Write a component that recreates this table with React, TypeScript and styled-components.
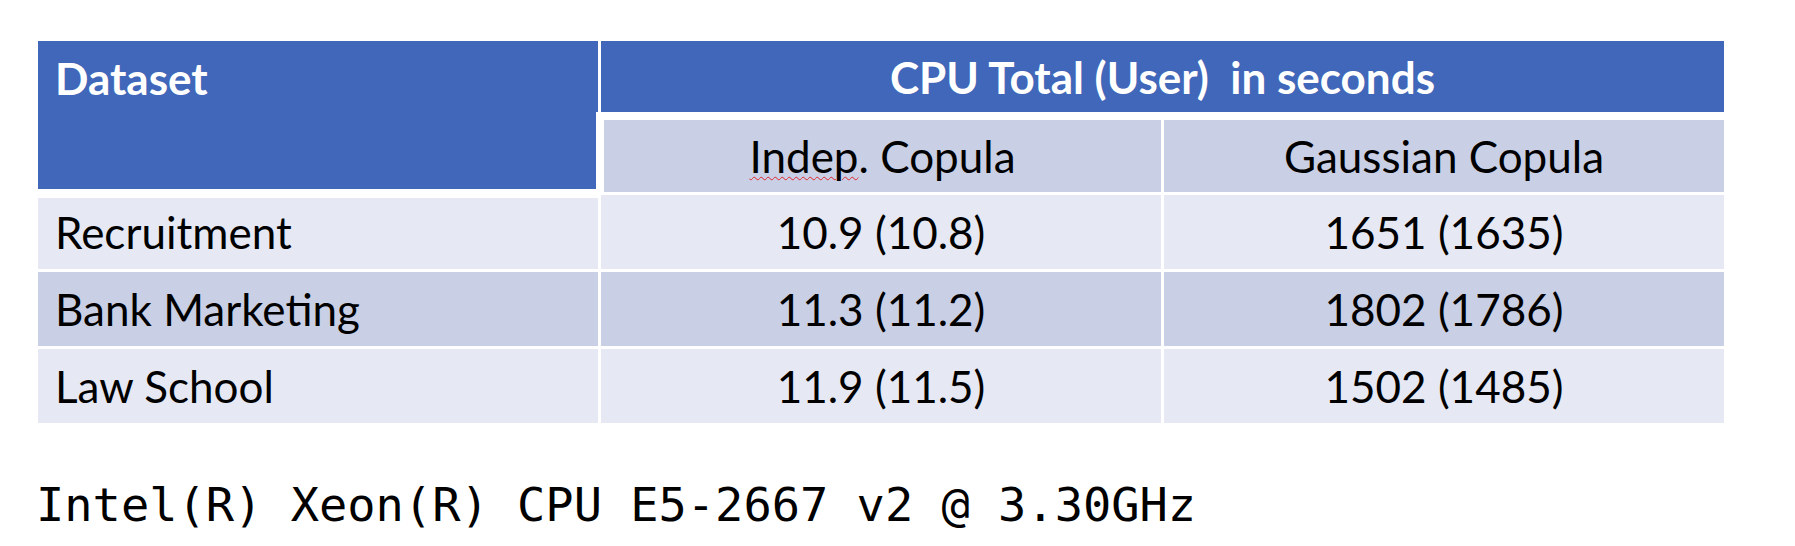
import React from "react";
import styled, { createGlobalStyle } from "styled-components";

const GlobalStyle = createGlobalStyle`
  html, body {
    margin: 0;
    padding: 0;
    background: #ffffff;
  }
  body {
    font-family: Lato, "Open Sans", sans-serif;
  }
`;

const BLUE = "#4067b9";
const BAND_DARK = "#c9cfe5";
const BAND_LIGHT = "#e6e8f4";

const Page = styled.div`
  padding: 41px 0 0 38px;
  display: flex;
  flex-direction: column;
  align-items: flex-start;
`;

const Table = styled.div`
  display: grid;
  width: 1686px;
  grid-template-columns: 560px 560px 560px;
  grid-template-rows: 71px 77px 74px 74px 74px;
  column-gap: 3px;
  row-gap: 3px;
  background: #ffffff;
  font-family: Lato, "Open Sans", sans-serif;
  font-size: 44px;
  line-height: 44px;
  color: #000000;
`;

const DatasetHead = styled.div`
  grid-column: 1;
  grid-row: 1 / span 2;
  margin-bottom: 3px;
  padding: 15px 0 0 17px;
  background:
    linear-gradient(#ffffff, #ffffff) right bottom / 2px calc(100% - 71px) no-repeat,
    ${BLUE};
  color: #ffffff;
  font-weight: 700;
`;

const GroupHead = styled.div`
  grid-column: 2 / span 2;
  grid-row: 1;
  display: flex;
  align-items: center;
  justify-content: center;
  background: ${BLUE};
  color: #ffffff;
  font-weight: 700;
  white-space: pre;
`;

const SubHead = styled.div<{ $first?: boolean }>`
  margin-top: 5px;
  margin-left: ${(p) => (p.$first ? "3px" : "0")};
  display: flex;
  align-items: center;
  justify-content: center;
  background: ${BAND_DARK};
`;

const Misspelled = styled.span`
  text-decoration-line: underline;
  text-decoration-style: wavy;
  text-decoration-color: #e0262b;
  text-decoration-thickness: 1px;
  text-underline-offset: 3px;
`;

const Cell = styled.div<{ $dark?: boolean; $label?: boolean; $notch?: boolean }>`
  display: flex;
  align-items: center;
  justify-content: ${(p) => (p.$label ? "flex-start" : "center")};
  padding-left: ${(p) => (p.$label ? "17px" : "0")};
  background: ${(p) => (p.$dark ? BAND_DARK : BAND_LIGHT)};
  box-shadow: ${(p) => (p.$notch ? "inset 0 3px 0 #ffffff" : "none")};
`;

const Caption = styled.div`
  margin: 54px 0 0 -2px;
  font-family: "DejaVu Sans Mono", "Liberation Mono", monospace;
  font-size: 47px;
  line-height: 56px;
  color: #000000;
  white-space: pre;
`;

type Row = { name: string; indep: string; gauss: string };

const rows: Row[] = [
  { name: "Recruitment", indep: "10.9 (10.8)", gauss: "1651 (1635)" },
  { name: "Bank Marketing", indep: "11.3 (11.2)", gauss: "1802 (1786)" },
  { name: "Law School", indep: "11.9 (11.5)", gauss: "1502 (1485)" },
];

export default function App() {
  return (
    <>
      <GlobalStyle />
      <Page>
        <Table>
          <DatasetHead>Dataset</DatasetHead>
          <GroupHead>{"CPU Total (User)  in seconds"}</GroupHead>
          <SubHead $first>
            <span>
              <Misspelled>Indep</Misspelled>. Copula
            </span>
          </SubHead>
          <SubHead>Gaussian Copula</SubHead>
          {rows.map((r, i) => {
            const dark = i % 2 === 1;
            return (
              <React.Fragment key={r.name}>
                <Cell $label $dark={dark} $notch={i === 0}>
                  {r.name}
                </Cell>
                <Cell $dark={dark}>{r.indep}</Cell>
                <Cell $dark={dark}>{r.gauss}</Cell>
              </React.Fragment>
            );
          })}
        </Table>
        <Caption>Intel(R) Xeon(R) CPU E5-2667 v2 @ 3.30GHz</Caption>
      </Page>
    </>
  );
}
